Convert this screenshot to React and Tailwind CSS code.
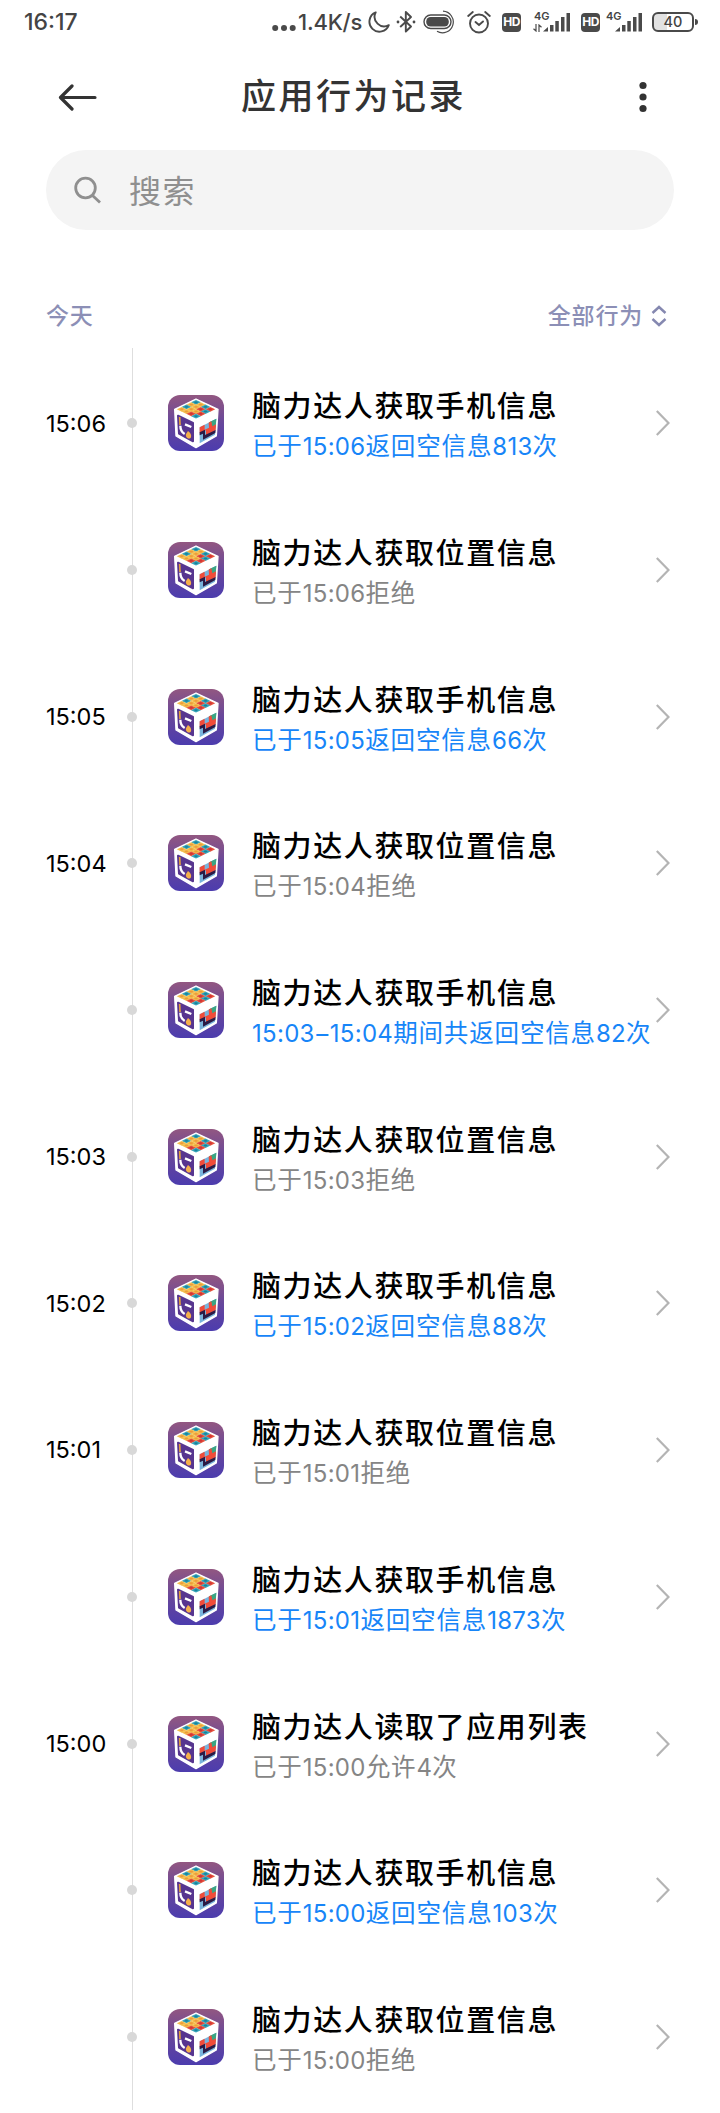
const records = [
    { time: '15:06', title: '脑力达人获取手机信息', detail: '已于15:06返回空信息813次', blocked: true },
    { time: '', title: '脑力达人获取位置信息', detail: '已于15:06拒绝' },
    { time: '15:05', title: '脑力达人获取手机信息', detail: '已于15:05返回空信息66次', blocked: true },
    { time: '15:04', title: '脑力达人获取位置信息', detail: '已于15:04拒绝' },
    { time: '', title: '脑力达人获取手机信息', detail: '15:03–15:04期间共返回空信息82次', blocked: true },
    { time: '15:03', title: '脑力达人获取位置信息', detail: '已于15:03拒绝' },
    { time: '15:02', title: '脑力达人获取手机信息', detail: '已于15:02返回空信息88次', blocked: true },
    { time: '15:01', title: '脑力达人获取位置信息', detail: '已于15:01拒绝' },
    { time: '', title: '脑力达人获取手机信息', detail: '已于15:01返回空信息1873次', blocked: true },
    { time: '15:00', title: '脑力达人读取了应用列表', detail: '已于15:00允许4次' },
    { time: '', title: '脑力达人获取手机信息', detail: '已于15:00返回空信息103次', blocked: true },
    { time: '', title: '脑力达人获取位置信息', detail: '已于15:00拒绝' },
];

// Tiles on the lid of the cube icon
const lidTiles = ['BYBR', 'YYRB', 'BYYR', 'YYRB'];
const tileColors = {
    B: ['#35a3b8', '#17829c'],
    Y: ['#f3bd4c', '#ee9a3c'],
    R: ['#e5503c', '#cf3436'],
};

function SignalBars() {
    return (
        <svg width="28" height="20" viewBox="0 0 28 20" fill="#4a4a4a">
            <path d="M0 19.5 5 15v4.5zM7 13h3.5v6.5H7zM12.3 9h3.5v10.5h-3.5zM18 5h3.5v14.5H18zM23.5 1H27v18.5h-3.5z" />
        </svg>
    );
}

function HdBadge() {
    return (
        <span className="flex h-[19px] w-[19px] items-center justify-center rounded-[4px] bg-[#4a4a4a] text-[12px] font-bold leading-none tracking-[-0.6px] text-white">
            HD
        </span>
    );
}

function StatusBar() {
    return (
        <div className="flex h-11 items-center pl-6 pr-[22px] text-[#444]">
            <span className="text-[23px] font-medium leading-none">16:17</span>
            <div className="ml-auto flex items-center">
                <svg width="24" height="20" viewBox="0 0 24 20" fill="#4a4a4a">
                    <circle cx="3.2" cy="16" r="3" />
                    <circle cx="12" cy="16" r="3" />
                    <circle cx="20.7" cy="16" r="3" />
                </svg>
                <span className="ml-0.5 w-[70px] whitespace-nowrap text-[22px] font-medium leading-none tracking-[-0.2px]">1.4K/s</span>
                {/* Do not disturb */}
                <svg width="22" height="22" viewBox="0 0 22 22" fill="none" stroke="#4a4a4a" strokeWidth="1.9" strokeLinejoin="round">
                    <path d="M7.7 1.4A10 10 0 1 0 20.8 14.2 9.6 9.6 0 0 1 7.7 1.4z" />
                </svg>
                {/* Bluetooth */}
                <svg className="ml-1.5" width="20" height="24" viewBox="0 0 20 24" fill="none" stroke="#4a4a4a" strokeWidth="1.9" strokeLinejoin="round">
                    <path d="M4.2 6.5 15 16.5l-5.2 5V2l5.2 5L4.2 17" />
                    <circle cx="2" cy="12" r="1.4" fill="#4a4a4a" stroke="none" />
                    <circle cx="18" cy="12" r="1.4" fill="#4a4a4a" stroke="none" />
                </svg>
                <svg className="ml-[7px]" width="34" height="24" viewBox="0 0 34 24" fill="none" stroke="#4a4a4a">
                    <rect x="1" y="5" width="27" height="13.5" rx="6.75" strokeWidth="1.4" />
                    <rect x="3.2" y="7" width="22.6" height="9.5" rx="4.4" fill="#4a4a4a" stroke="none" />
                    <path d="M20 1.2A10.8 10.8 0 1 1 14 21.3" strokeWidth="1.2" />
                </svg>
                {/* Alarm */}
                <svg className="ml-[10px]" width="26" height="24" viewBox="0 0 26 24" fill="none" stroke="#4a4a4a" strokeWidth="1.9" strokeLinecap="round">
                    <circle cx="12" cy="13.5" r="9" />
                    <path d="m8.5 12 3.5 3 4-3.5M1.2 6 5.8 2M22.8 6l-4.6-4" />
                </svg>
                <div className="ml-[9px]"><HdBadge /></div>
                <div className="relative ml-[22px] flex h-5">
                    <SignalBars />
                    <span className="absolute -left-[9px] -top-px text-[11px] font-semibold leading-none">4G</span>
                    <svg className="absolute -left-[10px] bottom-0" width="9" height="8" viewBox="0 0 9 8" fill="none" stroke="#4a4a4a" strokeWidth="1.2">
                        <path d="M3 0v7L.5 4.8M6 8V1l2.5 2.2" />
                    </svg>
                </div>
                <div className="ml-[10px]"><HdBadge /></div>
                <div className="relative ml-[15px] flex h-5">
                    <SignalBars />
                    <span className="absolute -left-[9px] -top-px text-[11px] font-semibold leading-none">4G</span>
                </div>
                <div className="ml-[9px] flex h-5 w-[42px] items-center justify-center rounded-[6px] border-2 border-[#4a4a4a] bg-linear-to-r from-[#e2e2e2] from-35% to-white to-35% text-[14.5px] font-medium leading-none">
                    40
                </div>
                <span className="ml-px h-1.5 w-[3px] rounded-r-sm bg-[#4a4a4a]" />
            </div>
        </div>
    );
}

function CubeIcon() {
    return (
        <svg className="h-14 w-14 shrink-0" viewBox="0 0 168 168">
            <defs>
                <linearGradient id="cube-bg" x1="0" y1="0" x2="0" y2="1">
                    <stop offset="0" stopColor="#925781" />
                    <stop offset=".5" stopColor="#67479b" />
                    <stop offset="1" stopColor="#4c3cae" />
                </linearGradient>
            </defs>
            <rect width="168" height="168" rx="36" fill="url(#cube-bg)" />
            <path d="M84 12 150 43l-5 80-61 35-60-35-4-80z" fill="#fff" stroke="#fff" strokeWidth="4" strokeLinejoin="round" />
            {/* Top face: 4x4 board projected onto the lid */}
            <g transform="matrix(14.3 6.9 -14.3 6.9 84 15)">
                {lidTiles.map((row, j) =>
                    row.split('').map((tile, i) => (
                        <g key={`${i}-${j}`}>
                            <rect x={i} y={j} width="1.03" height="1.03" fill={tileColors[tile][0]} />
                            <circle cx={i + 0.5} cy={j + 0.5} r=".27" fill={tileColors[tile][1]} />
                        </g>
                    ))
                )}
            </g>
            {/* Left face */}
            <path d="m30 62 45 22v55l-42-23z" fill="#57358f" stroke="#57358f" strokeWidth="6" strokeLinejoin="round" />
            <path d="m35 66 1 24" stroke="#e6a13c" strokeWidth="5" />
            <path d="M37 92c0 12 3 19 13 25" fill="none" stroke="#fff" strokeWidth="7" />
            <path d="m51 88 19 8" stroke="#fff" strokeWidth="7" />
            <path d="M60 108c8 6 11 12 9 19-2 6-12 5-15-3-2-7 2-9 6-16z" fill="#f5b04a" />
            {/* Right face */}
            <path d="m95 97 50-26-4 48-46 26z" fill="#79b4dc" />
            <path d="m123 82 22-11-2 26-12 5z" fill="#3aa583" />
            <path d="m95 97 15-8v15l13-6-1-15 8-4 3 15 11-6-1 18-29 15v-15l-19 9z" fill="#f04c3a" />
            <path d="m95 112 16-8v16l32-15-1 9-37 20v-18l-10 5z" fill="#2b1a45" />
        </svg>
    );
}

// Digits and Chinese text use different sizes and tracking, so split them into runs
function MixedText({ text }) {
    return text.split(/([\d:]+|–)/).filter(Boolean).map((part, i) => {
        if (part === '–') {
            return <span key={i} className="px-[1.5px] text-[24px]">{part}</span>;
        }
        return /^\d/.test(part) ? (
            <span key={i} className="text-[24px] tracking-[0.3px]">{part}</span>
        ) : (
            <span key={i} className="text-[24.5px] tracking-[0.85px]">{part}</span>
        );
    });
}

function RecordRow({ record }) {
    return (
        <li className="flex h-[146.7px] items-center">
            <span className="w-[81px] shrink-0 text-[23.5px] leading-none text-black">{record.time}</span>
            <span className="h-2.5 w-2.5 shrink-0 rounded-full bg-[#d8d8d8]" />
            <div className="ml-[31px] flex"><CubeIcon /></div>
            <div className="ml-7 flex w-[404px] shrink-0 flex-col whitespace-nowrap pt-2.5">
                <span className="text-[29px] font-medium leading-[39px] tracking-[1.6px] text-black">{record.title}</span>
                <span className={`leading-10 ${record.blocked ? 'text-[#1785f8]' : 'text-[#858585]'}`}>
                    <MixedText text={record.detail} />
                </span>
            </div>
            <svg className="shrink-0" width="14" height="26" viewBox="0 0 14 26" fill="none" stroke="#b4b4b4" strokeWidth="2.2">
                <path d="M.8 1 12.5 13 .8 25" />
            </svg>
        </li>
    );
}

export default function App() {
    return (
        <div className="h-[2113px] w-[720px] overflow-hidden bg-white font-['Inter','Noto_Sans_CJK_SC',sans-serif]">
            <StatusBar />

            {/* Header */}
            <header className="flex h-[106px] items-center pl-[58px] pr-[73px]">
                <svg width="40" height="28" viewBox="0 0 40 28" fill="none" stroke="#333" strokeWidth="3.2" strokeLinecap="round" strokeLinejoin="round">
                    <path d="M37 14.5H3M14 3 2.5 14.5 14 26" />
                </svg>
                <h1 className="ml-[143px] pb-0.5 text-[35px] font-medium leading-none tracking-[2.5px] text-[#333]">应用行为记录</h1>
                <svg className="ml-auto" width="8" height="32" viewBox="0 0 8 32" fill="#333">
                    <circle cx="4" cy="4.5" r="3.6" />
                    <circle cx="4" cy="16" r="3.6" />
                    <circle cx="4" cy="27.5" r="3.6" />
                </svg>
            </header>

            {/* Search */}
            <div className="mx-[46px] flex h-20 items-center rounded-full bg-[#f4f4f4] pl-7">
                <svg width="27" height="28" viewBox="0 0 27 28" fill="none" stroke="#8f8f8f" strokeWidth="2.8">
                    <circle cx="11.5" cy="12" r="9.8" />
                    <path d="m18.5 19.5 7.5 7" />
                </svg>
                <span className="ml-7 pt-1 text-[32px] leading-none tracking-[1.5px] text-[#8f8f8f]">搜索</span>
            </div>

            {/* Day and filter */}
            <div className="mt-[68px] flex h-9 items-center justify-between pl-[46px] pr-[53px] text-[23px] font-medium leading-none tracking-[0.8px] text-[#8c8fb6]">
                <span>今天</span>
                <div className="flex items-center">
                    <span>全部行为</span>
                    <svg className="ml-2" width="16" height="22" viewBox="0 0 16 22" fill="none" stroke="#8588b0" strokeWidth="2.4">
                        <path d="m1.5 8 6.5-6 6.5 6M1.5 14l6.5 6 6.5-6" />
                    </svg>
                </div>
            </div>

            {/* Timeline */}
            <div className="relative mt-4 pl-[46px]">
                <div className="absolute -top-0.5 bottom-0 left-[132px] w-px bg-[#dedede]" />
                <ul className="relative">
                    {records.map((record, i) => (
                        <RecordRow key={i} record={record} />
                    ))}
                </ul>
            </div>
        </div>
    );
}
